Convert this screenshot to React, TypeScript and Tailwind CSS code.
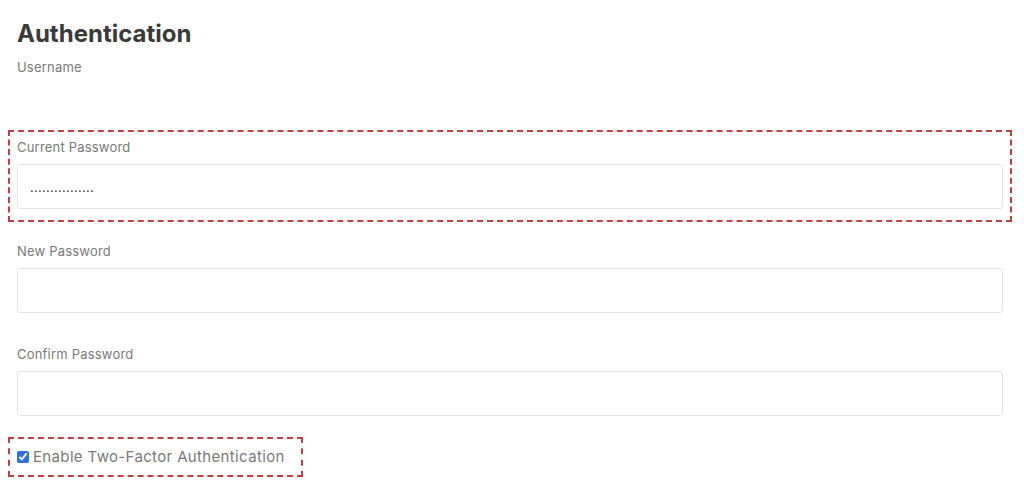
import React from "react";

const font = { fontFamily: "Inter, 'Open Sans', sans-serif" };

function Field({ label, value }: { label: string; value?: string }) {
  return (
    <div>
      <label className="block h-5 text-[13px] leading-5 tracking-[0.2px] text-[#7a7a7a]">{label}</label>
      <input
        type="text"
        readOnly
        value={value ?? ""}
        className="mt-[7px] block h-[45px] w-full rounded-[3px] border border-[#e4e4e4] bg-white px-3 text-[13px] tracking-[0.25px] text-[#444] outline-none"
      />
    </div>
  );
}

export default function App() {
  return (
    <div className="min-h-[503px] bg-white pl-[17px] pr-[21px]" style={font}>
      <h1 className="pt-[20px] text-[24px] font-bold leading-[28px] text-[#3a3a3a]">Authentication</h1>
      <div className="mt-[9px] h-5 text-[13px] leading-5 tracking-[0.2px] text-[#7a7a7a]">Username</div>

      {/* Current password (highlighted) */}
      <div className="-mx-[9px] mt-[53px] border-2 border-dashed border-[#c4403f] px-[7px] pt-[5px] pb-[11px]">
        <Field label="Current Password" value="................" />
      </div>

      <div className="mt-[19px]">
        <Field label="New Password" />
      </div>

      <div className="mt-[31px]">
        <Field label="Confirm Password" />
      </div>

      {/* Two-factor checkbox (highlighted) */}
      <div className="-ml-[9px] mt-[21px] inline-flex h-[40px] items-center border-2 border-dashed border-[#c4403f] pl-[7px] pr-[16px]">
        <input type="checkbox" checked readOnly className="m-0 h-[12px] w-[12px] accent-[#2f6fe0]" />
        <span className="ml-[4px] text-[15px] tracking-[0.35px] text-[#7a7a7a]">Enable Two-Factor Authentication</span>
      </div>
    </div>
  );
}
